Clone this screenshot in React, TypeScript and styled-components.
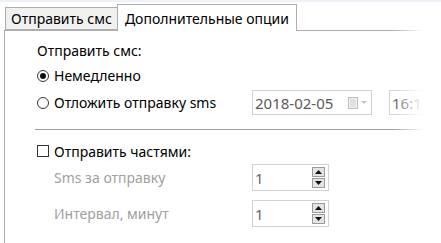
import React from 'react'
import styled, { createGlobalStyle } from 'styled-components'

const GlobalStyle = createGlobalStyle`
  html, body {
    margin: 0;
    padding: 0;
    background: #ffffff;
  }
  body {
    font-family: 'Noto Sans', 'Open Sans', sans-serif;
    font-size: 14px;
    color: #000000;
  }
`

const Window = styled.div`
  position: relative;
  width: 441px;
  height: 243px;
  overflow: hidden;
  background: #ffffff;
  border-top: 2px solid #edf2f8;
  box-sizing: border-box;
`

const TabStrip = styled.div`
  display: flex;
  align-items: flex-end;
  height: 28px;
  padding-left: 5px;
`

const Tab = styled.div<{ active?: boolean }>`
  box-sizing: border-box;
  display: flex;
  align-items: center;
  padding: 0 ${({ active }) => (active ? '7px' : '5px')};
  height: ${({ active }) => (active ? '27px' : '23px')};
  margin-bottom: ${({ active }) => (active ? '-1px' : '0')};
  background: ${({ active }) => (active ? '#ffffff' : '#f0f0f0')};
  border: 1px solid #adadad;
  border-bottom: ${({ active }) => (active ? 'none' : '1px solid #adadad')};
  margin-left: ${({ active }) => (active ? '-1px' : '0')};
  white-space: nowrap;
  position: relative;
  z-index: ${({ active }) => (active ? 2 : 1)};
`

const Panel = styled.div`
  border-top: 1px solid #adadad;
  border-left: 1px solid #adadad;
  margin-left: 4px;
  height: 220px;
  padding-left: 32px;
  box-sizing: border-box;
`

const Heading = styled.div`
  height: 30px;
  padding-top: 8px;
  box-sizing: border-box;
  display: flex;
  align-items: center;
`

const Row = styled.div<{ h: number; gap?: number }>`
  display: flex;
  align-items: center;
  height: ${({ h }) => h}px;
  margin-top: ${({ gap }) => gap ?? 0}px;
`

const Choice = styled.label`
  display: flex;
  align-items: center;
  gap: 5px;
  width: 215px;
  flex-shrink: 0;
  white-space: nowrap;
`

const Radio = styled.span<{ checked?: boolean }>`
  box-sizing: border-box;
  width: 12px;
  height: 12px;
  border-radius: 50%;
  border: 1px solid #333333;
  background: #ffffff;
  display: flex;
  align-items: center;
  justify-content: center;
  &::after {
    content: '';
    display: ${({ checked }) => (checked ? 'block' : 'none')};
    width: 6px;
    height: 6px;
    border-radius: 50%;
    background: #111111;
  }
`

const Check = styled.span`
  box-sizing: border-box;
  width: 12px;
  height: 12px;
  border: 1px solid #333333;
  background: #ffffff;
`

const SubLabel = styled.span`
  width: 215px;
  flex-shrink: 0;
  padding-left: 17px;
  box-sizing: border-box;
  color: #a0a0a0;
`

const Separator = styled.div`
  height: 1px;
  background: #a0a0a0;
  margin: 14px 0 0 -2px;
`

const Field = styled.div<{ w: number }>`
  box-sizing: border-box;
  width: ${({ w }) => w}px;
  height: 25px;
  border: 1px solid #d2d2d2;
  display: flex;
  align-items: center;
  padding: 0 3px 0 2px;
  color: #5a5a5a;
  font-size: 15px;
  flex-shrink: 0;
`

const FieldText = styled.span`
  flex: 1;
`

const TimeField = styled(Field)`
  margin-left: 17px;
`

const Spin = styled(Field)`
  height: 27px;
  padding-right: 3px;
  color: #666666;
`

const SpinButtons = styled.div`
  display: flex;
  flex-direction: column;
  gap: 1px;
`

const SpinButton = styled.div`
  box-sizing: border-box;
  width: 13px;
  height: 10px;
  border: 1px solid #9a9a9a;
  background: #e4e4e4;
  display: flex;
  align-items: center;
  justify-content: center;
`

const Fade = styled.div`
  position: absolute;
  top: 0;
  right: 0;
  width: 48px;
  height: 100%;
  background: linear-gradient(to right, rgba(255, 255, 255, 0) 0, #ffffff 30px);
  pointer-events: none;
  z-index: 5;
`

function Arrow({ up }: { up?: boolean }) {
  return (
    <svg width="7" height="4" viewBox="0 0 7 4">
      <path d={up ? 'M0 4 L3.5 0 L7 4 Z' : 'M0 0 L3.5 4 L7 0 Z'} fill="#111" />
    </svg>
  )
}

function CalendarIcon() {
  return (
    <svg width="20" height="12" viewBox="0 0 20 12">
      <rect x="0.5" y="0.5" width="9" height="11" fill="#f2f2f2" stroke="#bdbdbd" />
      <path d="M2 3h6M2 5h6M2 7h6M2 9h6" stroke="#d0d0d0" />
      <path d="M13 4 L16 7 L19 4 Z" fill="#c4c4c4" />
    </svg>
  )
}

function Spinner({ value }: { value: string }) {
  return (
    <Spin w={77}>
      <FieldText>{value}</FieldText>
      <SpinButtons>
        <SpinButton>
          <Arrow up />
        </SpinButton>
        <SpinButton>
          <Arrow />
        </SpinButton>
      </SpinButtons>
    </Spin>
  )
}

export default function App() {
  return (
    <Window>
      <GlobalStyle />
      <TabStrip>
        <Tab>Отправить смс</Tab>
        <Tab active>Дополнительные опции</Tab>
      </TabStrip>
      <Panel>
        <Heading>Отправить смс:</Heading>
        <Row h={29}>
          <Choice>
            <Radio checked />
            Немедленно
          </Choice>
        </Row>
        <Row h={25}>
          <Choice>
            <Radio />
            Отложить отправку sms
          </Choice>
          <Field w={120}>
            <FieldText>2018-02-05</FieldText>
            <CalendarIcon />
          </Field>
          <TimeField w={60}>
            <FieldText>16:10</FieldText>
          </TimeField>
        </Row>
        <Separator />
        <Row h={26} gap={8}>
          <Choice>
            <Check />
            Отправить частями:
          </Choice>
        </Row>
        <Row h={27}>
          <SubLabel>Sms за отправку</SubLabel>
          <Spinner value="1" />
        </Row>
        <Row h={27} gap={9}>
          <SubLabel>Интервал, минут</SubLabel>
          <Spinner value="1" />
        </Row>
      </Panel>
      <Fade />
    </Window>
  )
}
